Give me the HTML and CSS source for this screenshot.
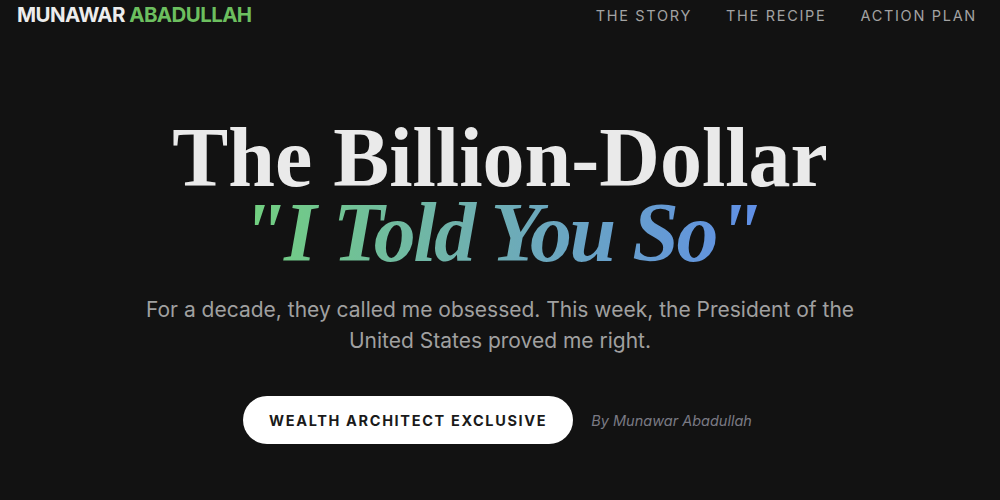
FILE: index.html
```html
<!DOCTYPE html>
<html>
<head>
<meta charset="utf-8">
<link rel="stylesheet" href="styles.css">
</head>
<body>
<header class="topbar">
  <div class="logo"><span class="logo-a">MUNAWAR</span> <span class="logo-b">ABADULLAH</span></div>
  <nav class="nav">
    <a class="nav-link">THE STORY</a>
    <a class="nav-link">THE RECIPE</a>
    <a class="nav-link">ACTION PLAN</a>
  </nav>
</header>
<main class="hero">
  <h1 class="title">
    <span class="title-line">The Billion-Dollar</span>
    <span class="title-grad">"I Told You So"</span>
  </h1>
  <p class="lede">For a decade, they called me obsessed. This week, the President of the United States proved me right.</p>
  <div class="meta">
    <span class="pill">WEALTH ARCHITECT EXCLUSIVE</span>
    <span class="byline">By Munawar Abadullah</span>
  </div>
</main>
</body>
</html>
```

FILE: styles.css
```css
html, body {
  margin: 0;
  padding: 0;
  background: #121212;
  height: 100%;
  overflow: hidden;
}
body {
  font-family: Inter, "Liberation Sans", sans-serif;
  color: #e8e8e8;
}
.topbar {
  display: flex;
  justify-content: space-between;
  align-items: center;
  padding: 0 23px 0 17px;
  height: 30px;
}
.logo {
  font-weight: 700;
  font-size: 20.5px;
  letter-spacing: -0.6px;
  margin-top: -1px;
}
.logo-a { color: #ececec; }
.logo-b { color: #6cbf5f; }
.nav {
  display: flex;
  gap: 34px;
}
.nav-link {
  color: #a3a3a3;
  font-size: 14.5px;
  letter-spacing: 1.7px;
}
.hero {
  display: flex;
  flex-direction: column;
  align-items: center;
  padding-top: 90px;
}
.title {
  margin: 0;
  display: flex;
  flex-direction: column;
  align-items: center;
  font-family: "Liberation Serif", "DejaVu Serif", serif;
  font-weight: 700;
  font-size: 84px;
  line-height: 75px;
  color: #eaeaea;
}
.title-grad {
  font-style: italic;
  letter-spacing: -2.5px;
  background: linear-gradient(90deg, #72d27c 0%, #6fb0b0 45%, #5f8ee8 100%);
  -webkit-background-clip: text;
  background-clip: text;
  color: transparent;
  padding: 0 8px;
}
.lede {
  margin: 24px 0 0;
  max-width: 740px;
  text-align: center;
  font-size: 21px;
  line-height: 31px;
  color: #a0a0a0;
}
.meta {
  display: flex;
  align-items: center;
  gap: 18px;
  margin-top: 40px;
  margin-right: 5px;
}
.pill {
  background: #ffffff;
  color: #1a1a1a;
  font-weight: 700;
  font-size: 14.5px;
  letter-spacing: 1.65px;
  padding: 15.5px 26px;
  border-radius: 24px;
}
.byline {
  font-style: italic;
  font-size: 14.5px;
  color: #7a7a84;
}
```
